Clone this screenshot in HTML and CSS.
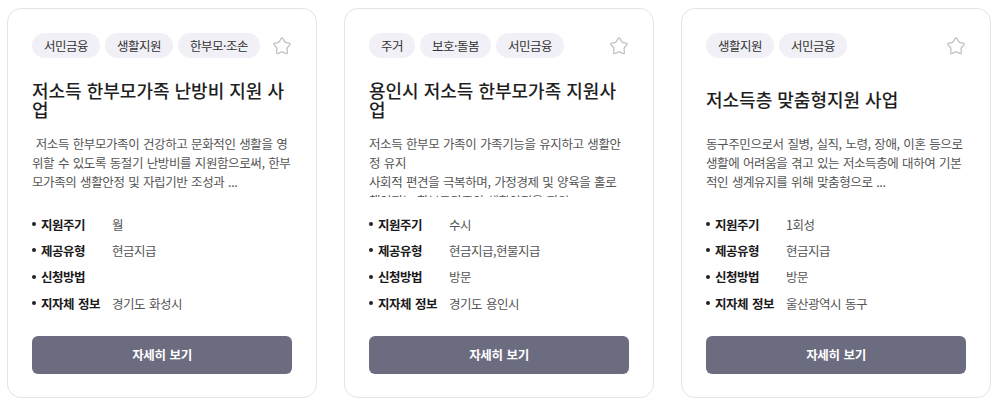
FILE: index.html
```html
<!DOCTYPE html>
<html lang="ko">
<head>
<meta charset="utf-8">
<title>복지 서비스</title>
<link rel="stylesheet" href="styles.css">
</head>
<body>
<div class="cards">
  <article class="card">
    <div class="card-top">
      <ul class="tags">
        <li class="tag">서민금융</li>
        <li class="tag">생활지원</li>
        <li class="tag">한부모·조손</li>
      </ul>
      <button class="fav" aria-label="관심">
        <svg viewBox="0 0 22 22" width="22" height="22"><path d="M11.98 3.69 L13.51 6.34 Q14.06 7.29 15.13 7.52 L18.12 8.15 Q20.03 8.56 18.72 10.02 L16.68 12.29 Q15.95 13.11 16.06 14.2 L16.38 17.24 Q16.58 19.19 14.79 18.39 L12 17.15 Q11 16.7 10 17.15 L7.21 18.39 Q5.42 19.19 5.62 17.24 L5.94 14.2 Q6.05 13.11 5.32 12.29 L3.28 10.02 Q1.97 8.56 3.88 8.15 L6.87 7.52 Q7.94 7.29 8.49 6.34 L10.02 3.69 Q11 2 11.98 3.69 Z"/></svg>
      </button>
    </div>
    <h3 class="title"><span>저소득 한부모가족 난방비 지원 사업</span></h3>
    <p class="desc"> 저소득 한부모가족이 건강하고 문화적인 생활을 영위할 수 있도록 동절기 난방비를 지원함으로써, 한부모가족의 생활안정 및 자립기반 조성과 ...</p>
    <ul class="info">
      <li><span class="label">지원주기</span><span class="value">월</span></li>
      <li><span class="label">제공유형</span><span class="value">현금지급</span></li>
      <li><span class="label">신청방법</span><span class="value"></span></li>
      <li><span class="label">지자체 정보</span><span class="value">경기도 화성시</span></li>
    </ul>
    <button class="more">자세히 보기</button>
  </article>

  <article class="card">
    <div class="card-top">
      <ul class="tags">
        <li class="tag">주거</li>
        <li class="tag">보호·돌봄</li>
        <li class="tag">서민금융</li>
      </ul>
      <button class="fav" aria-label="관심">
        <svg viewBox="0 0 22 22" width="22" height="22"><path d="M11.98 3.69 L13.51 6.34 Q14.06 7.29 15.13 7.52 L18.12 8.15 Q20.03 8.56 18.72 10.02 L16.68 12.29 Q15.95 13.11 16.06 14.2 L16.38 17.24 Q16.58 19.19 14.79 18.39 L12 17.15 Q11 16.7 10 17.15 L7.21 18.39 Q5.42 19.19 5.62 17.24 L5.94 14.2 Q6.05 13.11 5.32 12.29 L3.28 10.02 Q1.97 8.56 3.88 8.15 L6.87 7.52 Q7.94 7.29 8.49 6.34 L10.02 3.69 Q11 2 11.98 3.69 Z"/></svg>
      </button>
    </div>
    <h3 class="title"><span>용인시 저소득 한부모가족 지원사업</span></h3>
    <p class="desc">저소득 한부모 가족이 가족기능을 유지하고 생활안정 유지
사회적 편견을 극복하며, 가정경제 및 양육을 홀로 책임지는 한부모가족의 생활안정을 지원</p>
    <ul class="info">
      <li><span class="label">지원주기</span><span class="value">수시</span></li>
      <li><span class="label">제공유형</span><span class="value">현금지급,현물지급</span></li>
      <li><span class="label">신청방법</span><span class="value">방문</span></li>
      <li><span class="label">지자체 정보</span><span class="value">경기도 용인시</span></li>
    </ul>
    <button class="more">자세히 보기</button>
  </article>

  <article class="card">
    <div class="card-top">
      <ul class="tags">
        <li class="tag">생활지원</li>
        <li class="tag">서민금융</li>
      </ul>
      <button class="fav" aria-label="관심">
        <svg viewBox="0 0 22 22" width="22" height="22"><path d="M11.98 3.69 L13.51 6.34 Q14.06 7.29 15.13 7.52 L18.12 8.15 Q20.03 8.56 18.72 10.02 L16.68 12.29 Q15.95 13.11 16.06 14.2 L16.38 17.24 Q16.58 19.19 14.79 18.39 L12 17.15 Q11 16.7 10 17.15 L7.21 18.39 Q5.42 19.19 5.62 17.24 L5.94 14.2 Q6.05 13.11 5.32 12.29 L3.28 10.02 Q1.97 8.56 3.88 8.15 L6.87 7.52 Q7.94 7.29 8.49 6.34 L10.02 3.69 Q11 2 11.98 3.69 Z"/></svg>
      </button>
    </div>
    <h3 class="title"><span>저소득층 맞춤형지원 사업</span></h3>
    <p class="desc">동구주민으로서 질병, 실직, 노령, 장애, 이혼 등으로 생활에 어려움을 겪고 있는 저소득층에 대하여 기본적인 생계유지를 위해 맞춤형으로 ...</p>
    <ul class="info">
      <li><span class="label">지원주기</span><span class="value">1회성</span></li>
      <li><span class="label">제공유형</span><span class="value">현금지급</span></li>
      <li><span class="label">신청방법</span><span class="value">방문</span></li>
      <li><span class="label">지자체 정보</span><span class="value">울산광역시 동구</span></li>
    </ul>
    <button class="more">자세히 보기</button>
  </article>
</div>
</body>
</html>
```

FILE: styles.css
```css
* { box-sizing: border-box; }

body {
  margin: 0;
  background: #ffffff;
  font-family: "Noto Sans CJK KR", "Noto Sans", sans-serif;
  color: #222;
}

.cards {
  display: flex;
  gap: 27px;
  padding: 8px 0 0 7px;
}

.card {
  width: 310px;
  height: 390px;
  flex: none;
  display: flex;
  flex-direction: column;
  background: #fff;
  border: 1px solid #e3e3e8;
  border-radius: 14px;
  padding: 24px 24px 23px;
}

.card-top {
  display: flex;
  align-items: center;
  justify-content: space-between;
  height: 25px;
}

.tags {
  display: flex;
  gap: 5px;
  margin: 0;
  padding: 0;
  list-style: none;
}

.tag {
  height: 25px;
  line-height: 25px;
  padding: 0 12px;
  border-radius: 13px;
  background: #f1f0f7;
  color: #333;
  font-size: 12.5px;
  letter-spacing: -0.5px;
  word-spacing: 0.8px;
  white-space: nowrap;
}

.fav {
  display: flex;
  padding: 0;
  margin: 0 -1px 0 0;
  border: 0;
  background: none;
}

.fav svg {
  fill: none;
  stroke: #c2c2c6;
  stroke-width: 1.3;
  stroke-linejoin: round;
}

.title {
  margin: 22px 0 0;
  height: 40px;
  display: flex;
  align-items: center;
  font-size: 18px;
  line-height: 19.5px;
  font-weight: 500;
  color: #1f1f1f;
}

.desc {
  margin: 14px 0 0;
  height: 63px;
  overflow: hidden;
  font-size: 12.5px;
  line-height: 19px;
  letter-spacing: -0.4px;
  word-spacing: 0.6px;
  color: #555;
  white-space: pre-wrap;
}

.info {
  margin: 17px 0 0;
  padding: 0;
  list-style: none;
  display: flex;
  flex-direction: column;
  gap: 6.4px;
}

.info li {
  display: flex;
  align-items: center;
  height: 20px;
  font-size: 12.5px;
  letter-spacing: -0.5px;
  word-spacing: 1px;
}

.info li::before {
  content: "";
  width: 4px;
  height: 4px;
  border-radius: 50%;
  background: #222;
  margin-right: 5px;
  flex: none;
}

.label {
  width: 71px;
  flex: none;
  font-weight: 700;
  color: #1a1a1a;
}

.value {
  color: #555;
}

.more {
  margin-top: 22.8px;
  height: 38px;
  width: 100%;
  border: 0;
  border-radius: 6px;
  background: #6b6c7f;
  color: #fff;
  font-family: inherit;
  font-size: 12.5px;
  font-weight: 700;
  letter-spacing: -0.4px;
  word-spacing: 1px;
}
```
